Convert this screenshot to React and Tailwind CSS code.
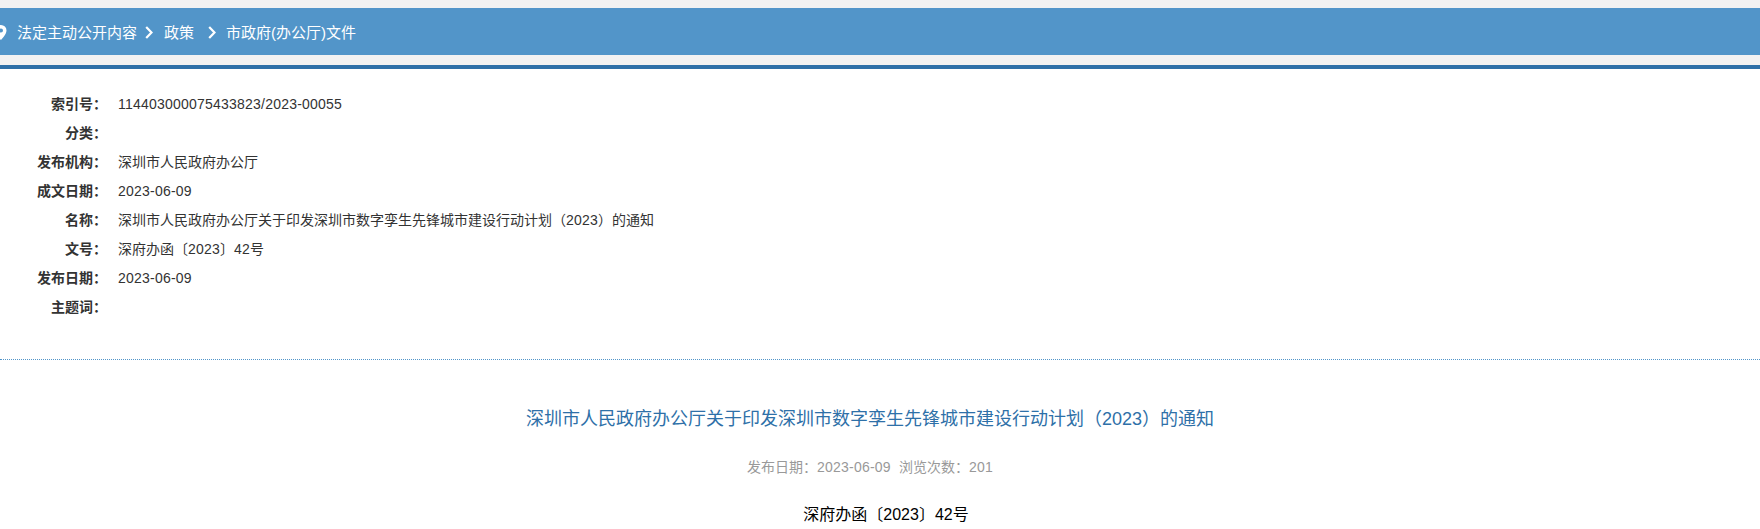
const FONT = "font-['Liberation_Sans','Noto_Sans_CJK_SC',sans-serif]";

// digits in the reference sit on whole pixel widths, Liberation at 14px is a bit narrower
function Num({ children }) {
  return <span className="tracking-[0.22px]">{children}</span>;
}

const rows = [
  ["索引号：", <Num>114403000075433823/2023-00055</Num>],
  ["分类：", ""],
  ["发布机构：", "深圳市人民政府办公厅"],
  ["成文日期：", <Num>2023-06-09</Num>],
  ["名称：", <>深圳市人民政府办公厅关于印发深圳市数字孪生先锋城市建设行动计划（<Num>2023</Num>）的通知</>],
  ["文号：", <>深府办函〔<Num>2023</Num>〕<Num>42</Num>号</>],
  ["发布日期：", <Num>2023-06-09</Num>],
  ["主题词：", ""],
];

function Chevron() {
  return (
    <svg width="8" height="13" viewBox="0 0 8 13" fill="none" stroke="white" strokeWidth="2.2" className="shrink-0">
      <path d="M1.2 1 L6.5 6.500 L1.2 12" />
    </svg>
  );
}

export default function App() {
  return (
    <div className={`h-[529px] overflow-hidden bg-white ${FONT}`}>
      <div className="bg-[#f2f2f2] pt-2 pb-2.5">
        <div className="h-[47px] bg-[#5295c9] flex items-center pt-1 text-[15px] text-white">
          <svg width="12" height="15" viewBox="0 0 12 15" className="shrink-0 -ml-[5px] mr-2.5 -mt-0.5">
            <path fill="white" fillRule="evenodd" d="M6 0a5.500 5.500 0 0 0-5.500 5.500C.5 9.500 6 15 6 15s5.500-5.500 5.500-9.500A5.500 5.500 0 0 0 6 0Zm0 7.500a2 2 0 1 1 0-4 2 2 0 0 1 0 4Z" />
          </svg>
          <span>法定主动公开内容</span>
          <span className="ml-2 mr-[11px] -mt-0.5"><Chevron /></span>
          <span>政策</span>
          <span className="ml-3.5 mr-2.5 -mt-0.5"><Chevron /></span>
          <span>市政府(办公厅)文件</span>
        </div>
      </div>
      <div className="h-1 bg-[#2e70a8]" />

      <div className="pt-5 pb-[38px] border-b border-dotted border-[#5295c9]">
        {rows.map(([label, value]) => (
          <div key={label} className="flex h-[29px] items-center text-sm text-[#333]">
            <div className="w-[107px] shrink-0 text-right font-bold">{label}</div>
            <div className="ml-[11px]">{value}</div>
          </div>
        ))}
      </div>

      <div className="w-[1740px] text-center">
        <h1 className="mt-[46px] text-lg leading-[27px] font-normal text-[#2e70a8]">
          深圳市人民政府办公厅关于印发深圳市数字孪生先锋城市建设行动计划（2023）的通知
        </h1>
        <p className="mt-[24px] text-sm leading-[21px] text-[#999]">
          发布日期：<Num>2023-06-09</Num><span className="ml-2">浏览次数：<Num>201</Num></span>
        </p>
        <p className="mt-[25px] text-base leading-6 text-black indent-8">深府办函〔2023〕42号</p>
      </div>
    </div>
  );
}
